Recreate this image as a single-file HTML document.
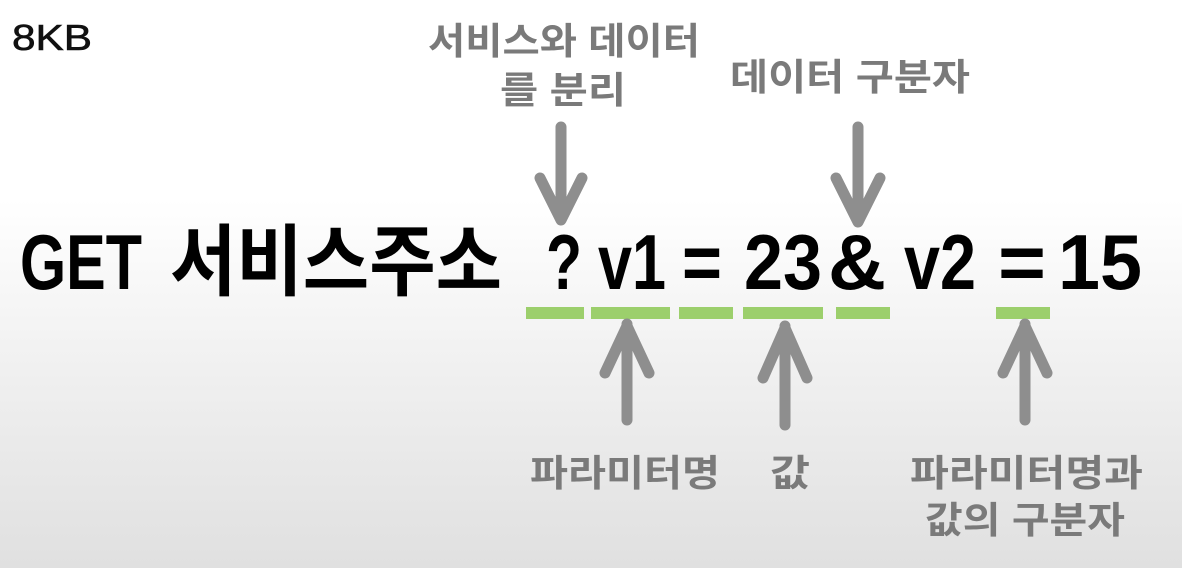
<!DOCTYPE html>
<html><head><meta charset="utf-8"><style>
html,body{margin:0;padding:0}
body{width:1182px;height:568px;overflow:hidden;background:linear-gradient(#fff 0%,#fff 35%,#f0f0f0 65%,#e0e0e0 100%)}
svg{display:block}
</style></head><body>
<svg width="1182" height="568" viewBox="0 0 1182 568">
<g font-family="Liberation Sans, Noto Sans CJK KR, sans-serif">
<text x="12" y="50" font-size="36" fill="#111" stroke="#111" stroke-width="0.6" textLength="80" lengthAdjust="spacingAndGlyphs">8KB</text>
</g>
<g font-family="Liberation Sans, Noto Sans CJK KR, sans-serif" font-weight="bold" fill="#7a7a7a" font-size="37">
<text x="428" y="54" textLength="272" lengthAdjust="spacingAndGlyphs">서비스와 데이터</text>
<text x="500" y="103" textLength="126" lengthAdjust="spacingAndGlyphs">를 분리</text>
<text x="730" y="90" textLength="240" lengthAdjust="spacingAndGlyphs">데이터 구분자</text>
<text x="530" y="486" textLength="190" lengthAdjust="spacingAndGlyphs">파라미터명</text>
<text x="770" y="486" textLength="40" lengthAdjust="spacingAndGlyphs">값</text>
<text x="910" y="486" textLength="233" lengthAdjust="spacingAndGlyphs">파라미터명과</text>
<text x="925" y="533" textLength="200" lengthAdjust="spacingAndGlyphs">값의 구분자</text>
</g>
<g font-family="Liberation Sans, Noto Sans CJK KR, sans-serif" font-weight="bold" fill="#000" font-size="78">
<text x="20" y="289" textLength="122" lengthAdjust="spacingAndGlyphs">GET</text>
<text x="170" y="289" textLength="332" lengthAdjust="spacingAndGlyphs">서비스주소</text>
<text x="546" y="289" textLength="36" lengthAdjust="spacingAndGlyphs">?</text>
<text x="598" y="289" textLength="68" lengthAdjust="spacingAndGlyphs">v1</text>
<text x="682" y="289" textLength="40" lengthAdjust="spacingAndGlyphs">=</text>
<text x="744" y="289" textLength="78" lengthAdjust="spacingAndGlyphs">23</text>
<text x="828" y="289" textLength="58" lengthAdjust="spacingAndGlyphs">&amp;</text>
<text x="904" y="289" textLength="72" lengthAdjust="spacingAndGlyphs">v2</text>
<text x="998" y="289" textLength="48" lengthAdjust="spacingAndGlyphs">=</text>
<text x="1058" y="289" textLength="84" lengthAdjust="spacingAndGlyphs">15</text>
</g>
<g fill="#9ccf6c">
<rect x="526" y="307" width="58" height="12"/>
<rect x="591" y="307" width="79" height="12"/>
<rect x="679" y="307" width="54" height="12"/>
<rect x="743" y="307" width="80" height="12"/>
<rect x="836" y="307" width="54" height="12"/>
<rect x="996" y="307" width="54" height="12"/>
</g>
<g stroke="#8e8e8e" stroke-width="11" fill="none" stroke-linecap="round" stroke-linejoin="round">
<path d="M561 127V220M540 178L561 220L582 178"/>
<path d="M858 127V222M836 178L858 222L880 178"/>
<path d="M627 420V324M605 373L627 326L649 373"/>
<path d="M785 425V326M763 378L785 328L807 378"/>
<path d="M1025 420V324M1003 373L1025 326L1047 373"/>
</g>
</svg>
</body></html>
